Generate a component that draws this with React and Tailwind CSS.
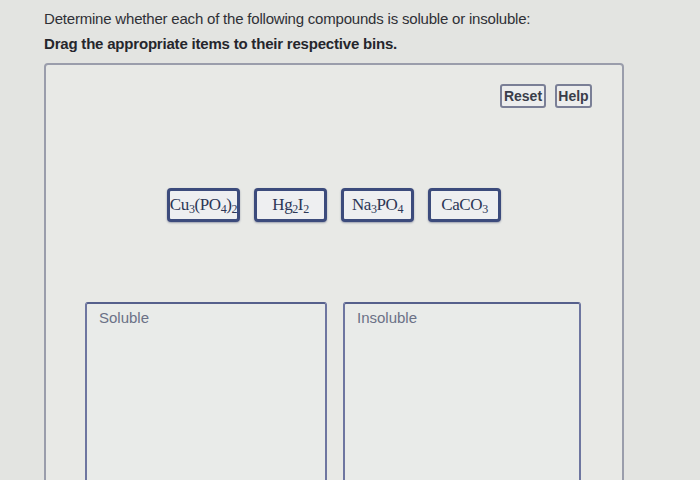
import React from 'react';

const chips = [
  <>Cu<sub>3</sub>(PO<sub>4</sub>)<sub>2</sub></>,
  <>Hg<sub>2</sub>I<sub>2</sub></>,
  <>Na<sub>3</sub>PO<sub>4</sub></>,
  <>CaCO<sub>3</sub></>,
];

const App = () => {
  return (
    <div className="h-[480px] w-[700px] overflow-hidden bg-[#e3e4e1] font-['Liberation_Sans',Arial,sans-serif]">
      <div className="pl-[44px] pt-[9px]">
        <p className="text-[15px] leading-[20px] tracking-[-0.2px] text-[#2f3036]">
          Determine whether each of the following compounds is soluble or insoluble:
        </p>
        <p className="mt-[5px] text-[15px] font-bold leading-[20px] tracking-[-0.2px] text-[#25262c]">
          Drag the appropriate items to their respective bins.
        </p>

        <div className="mt-[9px] h-[440px] w-[580px] rounded-[4px] border-2 border-[#9a9dab] bg-[#e8e9e6]">
          <div className="flex justify-end gap-[9px] pr-[30px] pt-[19px]">
            <button className="h-[24px] w-[46px] rounded-[3px] border-2 border-[#7a7f96] bg-[#eceded] text-[14px] font-bold text-[#3a3d4a]">
              Reset
            </button>
            <button className="h-[24px] w-[37px] rounded-[3px] border-2 border-[#7a7f96] bg-[#eceded] text-[14px] font-bold text-[#3a3d4a]">
              Help
            </button>
          </div>

          <div className="mt-[80px] flex justify-center gap-[14px]">
            {chips.map((c, i) => (
              <div
                key={i}
                className="flex h-[34px] w-[73px] items-center justify-center rounded-[4px] border-[3px] border-[#3c4b7c] bg-[#eeeff1] font-['Liberation_Serif','Times_New_Roman',serif] text-[17px] tracking-[-0.4px] text-[#2c3656] shadow-[0_1px_2px_rgba(40,50,90,0.4)] [&_sub]:text-[12px]"
              >
                <span>{c}</span>
              </div>
            ))}
          </div>

          <div className="mt-[80px] flex justify-center gap-[16px] pr-[2px]">
            <div className="h-[200px] w-[242px] rounded-t-[3px] border-2 border-[#6e76a0] border-t-[#56608c] bg-[#e9ebe9] px-[12px] pt-[3px] text-[15px] text-[#6b7186]">
              Soluble
            </div>
            <div className="h-[200px] w-[238px] rounded-t-[3px] border-2 border-[#6e76a0] border-t-[#56608c] bg-[#e9ebe9] px-[12px] pt-[3px] text-[15px] text-[#6b7186]">
              Insoluble
            </div>
          </div>
        </div>
      </div>
    </div>
  );
};

export default App;
